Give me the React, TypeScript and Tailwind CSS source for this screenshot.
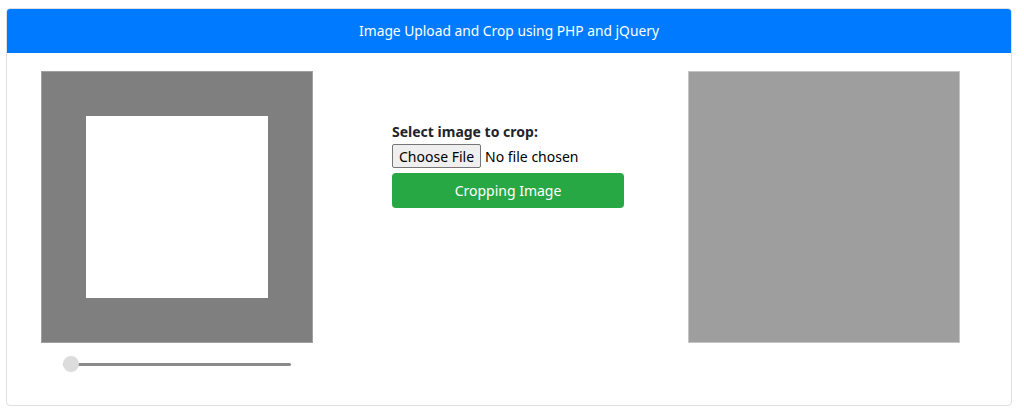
export default function App() {
  return (
    <div className="w-[1024px] h-[416px] bg-white pt-[8px] px-[6px]" style={{ fontFamily: '"Noto Sans", "Open Sans", sans-serif' }}>
      <div className="w-[1006px] h-[398px] border border-[#dfdfdf] rounded-[4px] overflow-hidden flex flex-col">
        <div className="h-[44px] bg-[#007bff] text-white text-[13.8px] flex items-center justify-center">
          Image Upload and Crop using PHP and jQuery
        </div>
        <div className="flex pt-[18px] pl-[34px]">
          <div className="w-[272px] flex flex-col">
            <div className="w-[272px] h-[272px] bg-[#7f7f7f] border border-[#a0a0a0] flex items-center justify-center">
              <div className="w-[182px] h-[182px] bg-white" />
            </div>
            <div className="relative mt-[13px] ml-[22px] w-[228px] h-[16px] flex items-center">
              <div className="w-full h-[3px] bg-[#8a8a8a] rounded" />
              <div className="absolute left-[0px] top-0 w-[16px] h-[16px] rounded-full bg-[#dcdcdc]" />
            </div>
          </div>
          <div className="ml-[79px] w-[232px] pt-[51px] flex flex-col">
            <div className="text-[14px] font-bold text-[#212529] leading-[20px]">Select image to crop:</div>
            <div className="flex items-center mt-[2px] text-[14px] text-black">
              <div className="h-[24px] px-[6px] border border-[#767676] rounded-[2px] bg-[#efefef] flex items-center">Choose File</div>
              <span className="ml-[4px]">No file chosen</span>
            </div>
            <div className="mt-[5px] h-[35px] bg-[#28a745] rounded-[4px] text-white text-[14px] flex items-center justify-center">
              Cropping Image
            </div>
          </div>
          <div className="ml-[64px] w-[272px] h-[272px] bg-[#9e9e9e] border border-[#c4c4c4]" />
        </div>
      </div>
    </div>
  );
}
